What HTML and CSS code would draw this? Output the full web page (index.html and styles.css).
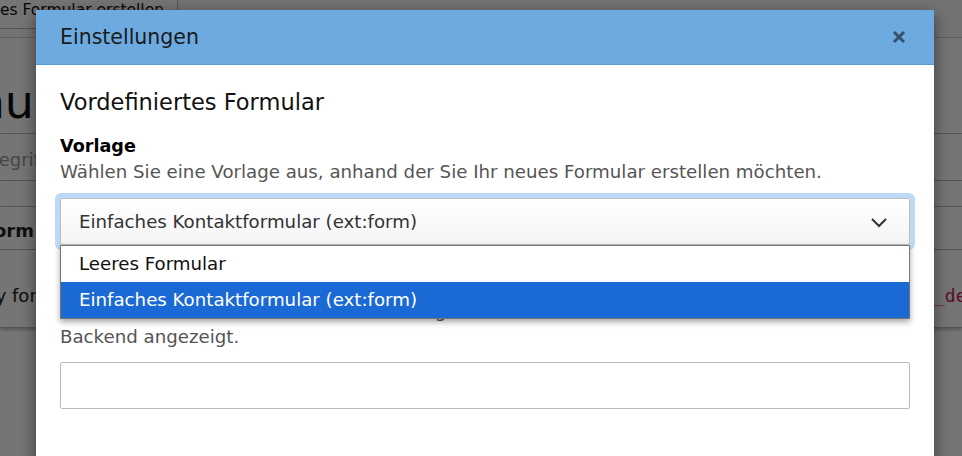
FILE: index.html
```html
<!DOCTYPE html>
<html lang="de">
<head>
  <meta charset="UTF-8" />
  <title>Einstellungen</title>
  <link rel="stylesheet" href="styles.css">
</head>
<body>
  <!-- Page behind the modal -->
  <div class="page">
    <div class="docheader">
      <div class="btn">Neues Formular erstellen</div>
    </div>
    <div class="title">
      <div class="clip-end">Formularmenu</div>
    </div>
    <div class="search">
      <div class="clip-end wide">Suchbegriff</div>
    </div>
    <div class="table">
      <div class="row head">
        <div class="clip-end">Form</div>
      </div>
      <div class="row">
        <div class="clip-end wider">Empty form</div>
        <div></div>
        <div class="code">_default</div>
      </div>
    </div>
  </div>

  <div class="backdrop"></div>

  <!-- Modal -->
  <div class="modal">
    <div class="modal-header">
      <span class="modal-title">Einstellungen</span>
      <svg class="close" width="14" height="14" viewBox="0 0 14 14">
        <path d="M2 2 L12 12 M12 2 L2 12" stroke="#34506c" stroke-width="3"/>
      </svg>
    </div>
    <div class="modal-body">
      <h2>Vordefiniertes Formular</h2>

      <div class="field">
        <label>Vorlage</label>
        <p class="help">Wählen Sie eine Vorlage aus, anhand der Sie Ihr neues Formular erstellen möchten.</p>
        <div class="select-wrap">
          <div class="select">
            <span>Einfaches Kontaktformular (ext:form)</span>
            <svg width="18" height="12" viewBox="0 0 18 12">
              <path d="M2 3 L9 10 L16 3" fill="none" stroke="#333" stroke-width="2"/>
            </svg>
          </div>
          <ul class="options">
            <li>Leeres Formular</li>
            <li class="selected">Einfaches Kontaktformular (ext:form)</li>
          </ul>
        </div>
      </div>

      <div class="field">
        <label>Formularname</label>
        <p class="help">Der Formularname wird zur Identifizierung des Formulars im<br>Backend angezeigt.</p>
        <div class="input"></div>
      </div>
    </div>
  </div>
</body>
</html>
```

FILE: styles.css
```css
* {
  margin: 0;
  padding: 0;
  box-sizing: border-box;
}

body {
  width: 962px;
  height: 456px;
  overflow: hidden;
  position: relative;
  font-family: "DejaVu Sans", Verdana, sans-serif;
  background: #fff;
  color: #333;
}

/* background page */
.page {
  background: #fff;
  height: 456px;
  white-space: nowrap;
}

.docheader {
  height: 38px;
  background: #fafafa;
  border-bottom: 1px solid #ccc;
}

.btn {
  display: inline-block;
  height: 29px;
  margin-left: -31px;
  padding: 0 13px 0 0;
  font-size: 15.5px;
  line-height: 20px;
  color: #111;
  background: #fff;
  border-right: 1px solid #bbb;
  border-bottom: 1px solid #bbb;
}

/* text that ends at the given width and overflows to the left */
.clip-end {
  display: flex;
  justify-content: flex-end;
  width: 34px;
}

.clip-end.wide {
  width: 46px;
}

.clip-end.wider {
  width: 54px;
}

.title {
  height: 96px;
  padding-top: 34px;
  font-size: 46px;
  line-height: 60px;
  color: #111;
  border-bottom: 1px solid #bbb;
}

.search {
  height: 47px;
  font-size: 18px;
  line-height: 52px;
  color: #999;
  border-bottom: 1px solid #bbb;
}

.table {
  margin-top: 25px;
  border-top: 1px solid #bbb;
}

.row {
  display: grid;
  grid-template-columns: 36px 898px auto;
  font-size: 18px;
  color: #222;
  border-bottom: 1px solid #bbb;
}

.row.head {
  height: 43px;
  line-height: 48px;
  font-weight: bold;
}

.row:last-child {
  height: 78px;
  line-height: 92px;
  box-shadow: 0 2px 3px rgba(0, 0, 0, 0.25);
}

.code {
  color: #c7254e;
  font-family: "DejaVu Sans Mono", monospace;
  font-size: 18px;
}

.backdrop {
  position: absolute;
  inset: 0;
  background: rgba(0, 0, 0, 0.54);
}

/* modal */
.modal {
  position: absolute;
  left: 36px;
  top: 10px;
  width: 898px;
  height: 520px;
  background: #fff;
  box-shadow: 0 5px 15px rgba(0, 0, 0, 0.5);
}

.modal-header {
  height: 55px;
  background: #6daae0;
  border-bottom: 1px solid #5b9bd4;
  display: flex;
  align-items: center;
  justify-content: space-between;
  padding: 0 28px 0 24px;
}

.modal-title {
  font-size: 20.5px;
  color: #1a1a1a;
}

.modal-body {
  padding: 24px 24px;
}

h2 {
  font-size: 22.5px;
  line-height: 27px;
  font-weight: normal;
  color: #111;
  margin-bottom: 19px;
}

.field {
  margin-bottom: 29px;
}

.field label {
  display: block;
  font-size: 17.6px;
  font-weight: bold;
  color: #000;
  line-height: 22px;
}

.help {
  margin-top: 2px;
  font-size: 18.2px;
  color: #555;
  line-height: 26px;
  margin-bottom: 13px;
}

.field + .field .help {
  margin-bottom: 12px;
}

.select-wrap {
  position: relative;
}

.select {
  height: 47px;
  border: 1px solid #bbb;
  border-radius: 2px;
  background: linear-gradient(#fff, #f4f4f4);
  box-shadow: 0 0 0 5px #bcdaf6;
  display: flex;
  align-items: center;
  justify-content: space-between;
  padding: 0 21px 0 18px;
  font-size: 18.2px;
  color: #333;
}

.options {
  position: absolute;
  left: 0;
  right: 0;
  top: 47px;
  list-style: none;
  background: #fff;
  border: 1px solid #767676;
  box-shadow: 0 3px 6px rgba(0, 0, 0, 0.35);
  z-index: 2;
}

.options li {
  height: 36px;
  line-height: 36px;
  padding-left: 18px;
  font-size: 18.2px;
  color: #111;
}

.options li.selected {
  background: #1a69d5;
  color: #fff;
}

.input {
  height: 47px;
  border: 1px solid #bbb;
  border-radius: 2px;
  background: #fff;
}
```
